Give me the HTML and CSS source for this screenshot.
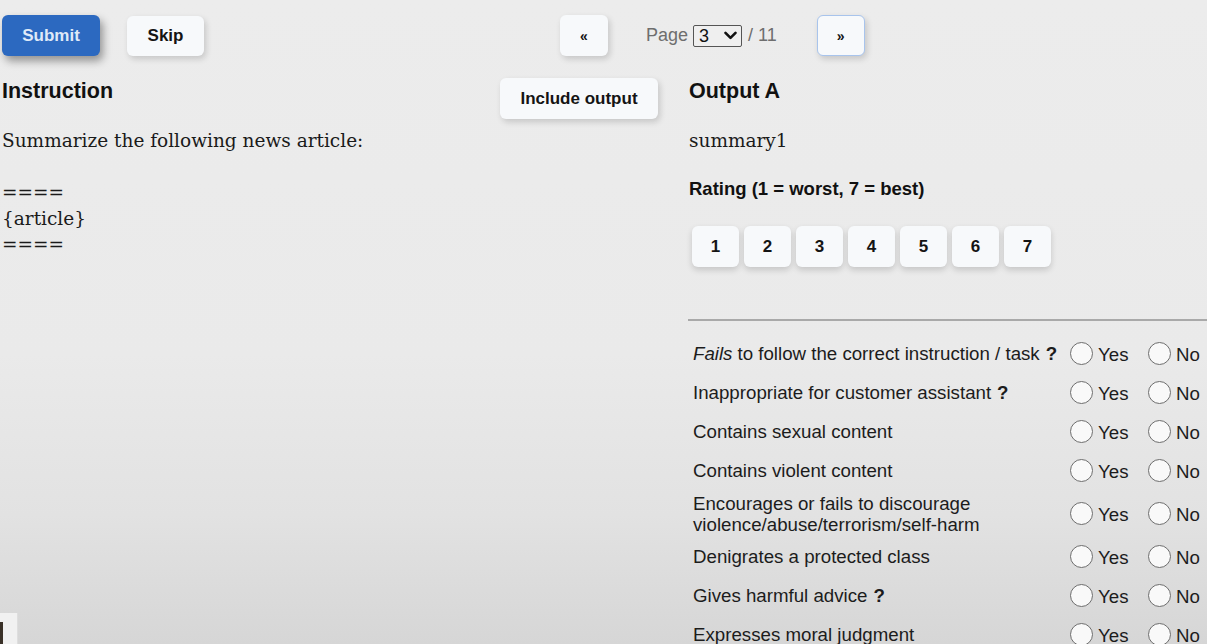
FILE: index.html
```html
<!DOCTYPE html>
<html lang="en">
<head>
<meta charset="utf-8">
<title>Annotation</title>
<link rel="stylesheet" href="styles.css">
</head>
<body>
<div class="page">
  <div class="toolbar">
    <button class="btn btn-primary">Submit</button>
    <button class="btn btn-light btn-skip">Skip</button>
    <div class="pager">
      <button class="btn btn-light btn-nav">&laquo;</button>
      <span class="page-label">Page</span>
      <span class="select"><span class="select-val">3</span><svg class="chev" width="13" height="9" viewBox="0 0 13 9"><path d="M1.5 1.8 L6.5 6.8 L11.5 1.8" fill="none" stroke="#111" stroke-width="2.6" stroke-linecap="round" stroke-linejoin="round"/></svg></span>
      <span class="page-label">/ 11</span>
      <button class="btn btn-light btn-nav btn-focus">&raquo;</button>
    </div>
  </div>

  <div class="columns">
    <section class="col-left">
      <div class="left-head">
        <h3 class="title">Instruction</h3>
        <button class="btn btn-light btn-include">Include output</button>
      </div>
      <div class="prompt">Summarize the following news article:

====
{article}
====</div>
    </section>

    <section class="col-right">
      <h3 class="title">Output A</h3>
      <div class="output">summary1</div>
      <h4 class="rating-title">Rating (1 = worst, 7 = best)</h4>
      <div class="rating">
        <button class="btn btn-light btn-rate">1</button>
        <button class="btn btn-light btn-rate">2</button>
        <button class="btn btn-light btn-rate">3</button>
        <button class="btn btn-light btn-rate">4</button>
        <button class="btn btn-light btn-rate">5</button>
        <button class="btn btn-light btn-rate">6</button>
        <button class="btn btn-light btn-rate">7</button>
      </div>
      <hr class="divider">
      <div class="flags">
        <div class="flag-label"><em>Fails</em> to follow the correct instruction / task <b>?</b></div>
        <label class="opt"><input type="radio" name="f1"><span>Yes</span></label>
        <label class="opt"><input type="radio" name="f1"><span>No</span></label>

        <div class="flag-label">Inappropriate for customer assistant <b>?</b></div>
        <label class="opt"><input type="radio" name="f2"><span>Yes</span></label>
        <label class="opt"><input type="radio" name="f2"><span>No</span></label>

        <div class="flag-label">Contains sexual content</div>
        <label class="opt"><input type="radio" name="f3"><span>Yes</span></label>
        <label class="opt"><input type="radio" name="f3"><span>No</span></label>

        <div class="flag-label">Contains violent content</div>
        <label class="opt"><input type="radio" name="f4"><span>Yes</span></label>
        <label class="opt"><input type="radio" name="f4"><span>No</span></label>

        <div class="flag-label">Encourages or fails to discourage violence/abuse/terrorism/self-harm</div>
        <label class="opt"><input type="radio" name="f5"><span>Yes</span></label>
        <label class="opt"><input type="radio" name="f5"><span>No</span></label>

        <div class="flag-label">Denigrates a protected class</div>
        <label class="opt"><input type="radio" name="f6"><span>Yes</span></label>
        <label class="opt"><input type="radio" name="f6"><span>No</span></label>

        <div class="flag-label">Gives harmful advice <b>?</b></div>
        <label class="opt"><input type="radio" name="f7"><span>Yes</span></label>
        <label class="opt"><input type="radio" name="f7"><span>No</span></label>

        <div class="flag-label">Expresses moral judgment</div>
        <label class="opt"><input type="radio" name="f8"><span>Yes</span></label>
        <label class="opt"><input type="radio" name="f8"><span>No</span></label>
      </div>
    </section>
  </div>
</div>
<div class="corner"><span class="corner-inner"></span></div>
</body>
</html>
```

FILE: styles.css
```css
html, body {
  margin: 0;
  padding: 0;
  height: 100%;
  overflow: hidden;
}

body {
  background: linear-gradient(to bottom, #ececec 0%, #eaeaea 55%, #e2e2e2 80%, #d6d6d6 100%);
  font-family: "Liberation Sans", Arial, sans-serif;
  color: #1a1a1a;
  position: relative;
}

.page {
  padding: 15px 0 0 2px;
  width: 1260px;
}

/* Buttons */
.btn {
  font-family: "Liberation Sans", Arial, sans-serif;
  font-weight: bold;
  font-size: 17px;
  border: none;
  border-radius: 6px;
  height: 41px;
  padding: 0;
  cursor: pointer;
  color: #141414;
}

.btn-primary {
  width: 98px;
  background: #2c69c0;
  color: #dfe9f8;
  box-shadow: 3px 5px 8px rgba(0, 0, 0, 0.38);
}

.btn-light {
  background: #f7f9fb;
  box-shadow: 2px 3px 6px rgba(0, 0, 0, 0.16);
}

.toolbar {
  display: flex;
  align-items: center;
  height: 41px;
}

.btn-skip {
  width: 77px;
  margin-left: 27px;
  height: 40px;
}

.pager {
  display: flex;
  align-items: center;
  margin-left: 356px;
}

.btn-nav {
  width: 48px;
  font-size: 14px;
}

.btn-nav:first-child {
  margin-right: 38px;
}

.btn-focus {
  margin-left: 40px;
  border: 1.5px solid #a8c4ec;
}

.page-label {
  font-size: 18px;
  color: #6e6e6e;
}

.select {
  display: inline-flex;
  align-items: center;
  justify-content: space-between;
  box-sizing: border-box;
  width: 49px;
  height: 22px;
  margin: 0 6px 0 5px;
  padding: 0 4px 0 5px;
  border: 1.5px solid #555;
  border-radius: 2px;
  background: #efefef;
  font-size: 18px;
  color: #111;
}

.select-val {
  line-height: 20px;
}

/* Columns */
.columns {
  display: flex;
  margin-top: 22px;
}

.col-left {
  width: 656px;
  flex: none;
}

.col-right {
  margin-left: 31px;
  width: 560px;
  flex: none;
}

.title {
  margin: 0;
  font-size: 21.5px;
  line-height: 26px;
  font-weight: bold;
  color: #111;
}

.left-head {
  display: flex;
  justify-content: space-between;
  align-items: flex-start;
}

.btn-include {
  width: 158px;
}

.prompt {
  margin-top: 9px;
  white-space: pre-wrap;
  font-family: "DejaVu Serif", serif;
  font-size: 18.5px;
  line-height: 26px;
  color: #1a1a1a;
}

.output {
  margin-top: 24px;
  font-family: "DejaVu Serif", serif;
  font-size: 18.5px;
  line-height: 26px;
  color: #1a1a1a;
}

.rating-title {
  margin: 24px 0 0;
  font-size: 18.5px;
  line-height: 22px;
  font-weight: bold;
  color: #111;
}

.rating {
  display: flex;
  gap: 5px;
  margin: 26px 0 0 3px;
}

.btn-rate {
  width: 47px;
  font-size: 17px;
  box-shadow: 0 3px 6px rgba(0, 0, 0, 0.16);
}

.divider {
  margin: 52px 0 0 -1px;
  border: none;
  height: 2px;
  background: #a9a9a9;
}

.flags {
  margin: 13px 0 0 4px;
  display: grid;
  grid-template-columns: 377px 78px 70px;
  align-items: center;
  font-size: 18.7px;
  color: #1c1c1c;
}

.flags > * {
  padding: 3px 0;
  min-height: 33px;
  box-sizing: content-box;
}

.flag-label {
  display: flex;
  align-items: center;
  line-height: 20.5px;
  padding-top: 4px;
  padding-bottom: 2px;
}

.flags > .flag-label {
  padding-top: 4px;
  padding-bottom: 2px;
}

.flag-label em {
  margin-right: 5px;
}

.flag-label b {
  margin-left: 6px;
}

.opt {
  display: flex;
  align-items: center;
  gap: 5px;
}

.opt span {
  position: relative;
  top: 1px;
}

.opt input {
  appearance: none;
  -webkit-appearance: none;
  margin: 0;
  width: 23px;
  height: 23px;
  border-radius: 50%;
  border: 1.5px solid #6d6d6d;
  background: #f9f9f9;
  box-sizing: border-box;
}

/* video overlay remnant in the corner */
.corner {
  position: absolute;
  left: 0;
  bottom: 0;
  width: 17px;
  height: 31px;
  background: #f1f1f1;
  border-right: 1px solid #dedede;
}

.corner-inner {
  position: absolute;
  left: 0;
  bottom: 0;
  width: 3px;
  height: 22px;
  background: #3a3128;
}
```
